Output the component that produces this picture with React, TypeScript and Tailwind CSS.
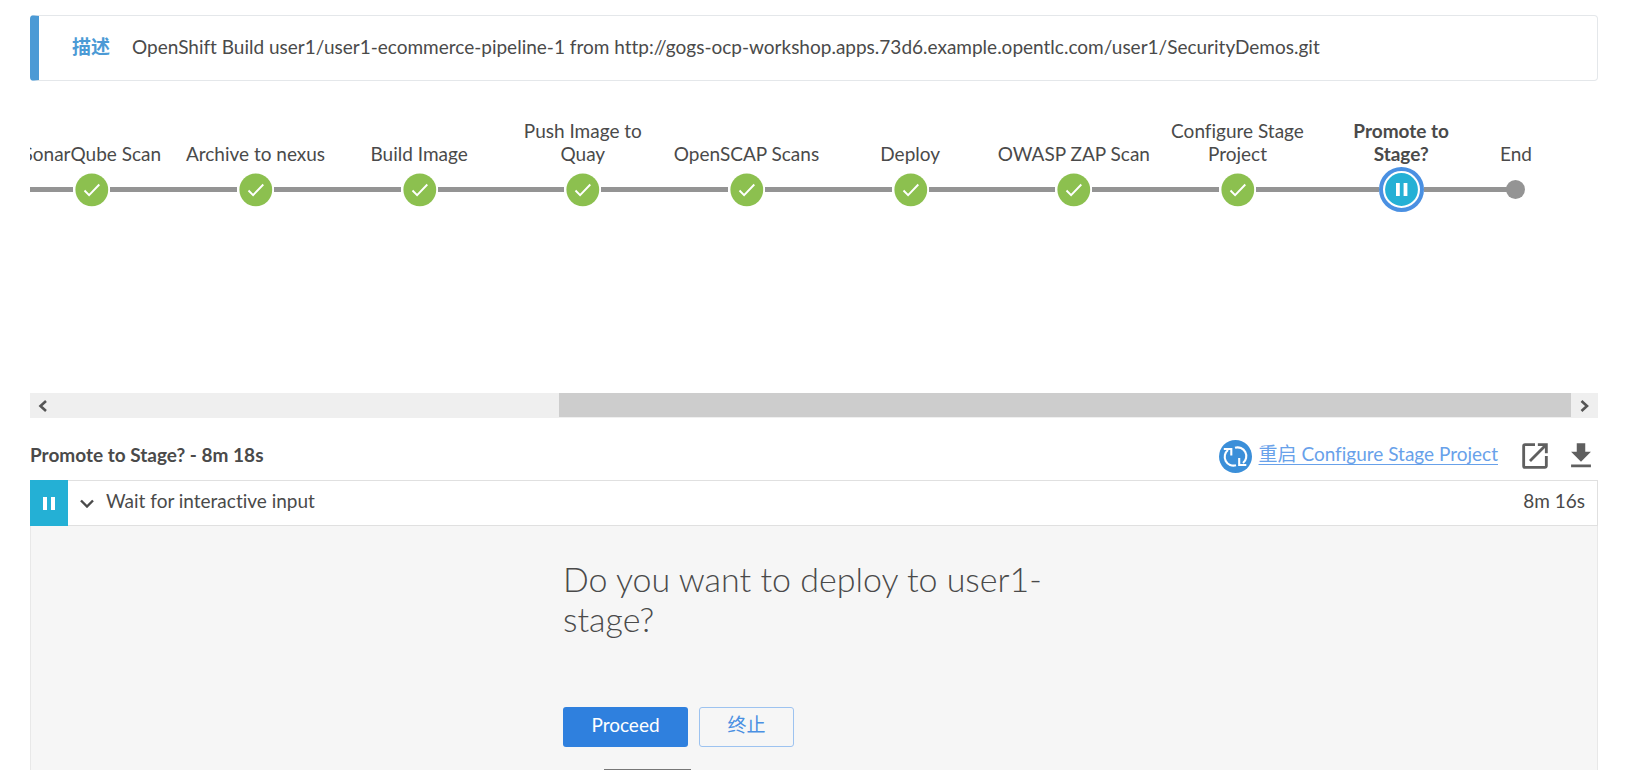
import React from "react";

const stages = [
  { name: "SonarQube Scan", state: "done" },
  { name: "Archive to nexus", state: "done" },
  { name: "Build Image", state: "done" },
  { name: "Push Image to Quay", state: "done" },
  { name: "OpenSCAP Scans", state: "done" },
  { name: "Deploy", state: "done" },
  { name: "OWASP ZAP Scan", state: "done" },
  { name: "Configure Stage Project", state: "done" },
  { name: "Promote to Stage?", state: "paused" },
];

function CheckNode() {
  return (
    <svg className="block h-[45px] w-[37px]" viewBox="4 0 37 45" aria-hidden="true">
      <circle cx="22.8" cy="22.8" r="16.4" fill="#8cc04f" />
      <path d="M15.5 23.5l4.6 4.6L30.3 17.5" fill="none" stroke="#fff" strokeWidth="1.9" />
    </svg>
  );
}

function PausedNode() {
  return (
    <svg className="block size-[45px]" viewBox="0 0 45 45" aria-hidden="true">
      <circle cx="22.5" cy="22.5" r="20.5" fill="#fff" stroke="#4a90e2" strokeWidth="4" />
      <circle cx="22.5" cy="22.5" r="16.4" fill="#24b0d5" />
      <path d="M17 16h3.8v13H17zM24.6 16h3.8v13h-3.8z" fill="#fff" />
    </svg>
  );
}

function Pipeline() {
  return (
    <div className="flex overflow-hidden pt-[38px] pb-[181px] text-center leading-[23px]">
      <ol className="-ml-5 grid min-w-0 flex-1 grid-cols-9">
        {stages.map((s) => (
          <li key={s.name} className="flex flex-col">
            <div className="flex h-12 items-end justify-center pb-0.5">
              <span className={s.state === "paused" ? "w-40 px-6 font-bold" : "w-40"}>{s.name}</span>
            </div>
            <div className="flex items-center">
              <span className="h-[5px] flex-1 bg-[#949494]" />
              {s.state === "paused" ? <PausedNode /> : <CheckNode />}
              <span className="h-[5px] flex-1 bg-[#949494]" />
            </div>
          </li>
        ))}
      </ol>
      <div className="mr-[49px] flex w-[66px] flex-col">
        <div className="flex h-12 items-end justify-center pb-0.5">End</div>
        <div className="flex h-[45px] items-center">
          <span className="h-[5px] w-6 bg-[#949494]" />
          <span className="-ml-px size-[19px] rounded-full bg-[#949494]" />
        </div>
      </div>
    </div>
  );
}

function ScrollStrip() {
  return (
    <div className="flex h-[25px] shrink-0 bg-[#efefef] text-[#555]">
      <button type="button" aria-label="Scroll left" className="flex w-[26px] items-center justify-center">
        <svg className="h-3 w-[10px]" viewBox="0 0 10 12" fill="none" stroke="currentColor" strokeWidth="2.6">
          <path d="M8 1L2.500 6 8 11" />
        </svg>
      </button>
      <div className="flex flex-1 justify-end">
        <div className="h-6 w-[66.8%] bg-[#cdcdcd]" />
      </div>
      <button type="button" aria-label="Scroll right" className="flex w-[27px] items-center justify-center">
        <svg className="h-3 w-[10px]" viewBox="0 0 10 12" fill="none" stroke="currentColor" strokeWidth="2.6">
          <path d="M1.500 1L7 6l-5.500 5" />
        </svg>
      </button>
    </div>
  );
}

export default function App() {
  return (
    <main className="h-screen overflow-hidden bg-white px-[30px] pt-[15px] font-['Lato','Noto_Sans_CJK_SC',sans-serif] text-[19px] text-[#4a4a4a] [font-variant-ligatures:none]">
      <div className="mr-4 flex h-screen flex-col">
        <section className="flex h-[66px] shrink-0 items-center gap-[22px] rounded border border-l-[9px] border-[#e4e7ea] border-l-[#4b9ad5] pb-0.5 pl-[33px]">
          <b className="text-[#4b9ad5]">描述</b>
          <p>OpenShift Build user1/user1-ecommerce-pipeline-1 from http://gogs-ocp-workshop.apps.73d6.example.opentlc.com/user1/SecurityDemos.git</p>
        </section>

        <Pipeline />
        <ScrollStrip />

        <header className="flex h-[62px] shrink-0 items-center">
          <h2 className="flex-1 pt-3 font-bold">Promote to Stage? - 8m 18s</h2>
          <a href="#restart" className="flex items-center gap-[7px] pt-[14px] text-[#68a1ea]">
            <svg className="size-[33px]" viewBox="0 0 33 33" aria-hidden="true">
              <circle cx="16.5" cy="16.5" r="16.5" fill="#3b8fd9" />
              <g fill="none" stroke="#fff" strokeWidth="2.1">
                <path d="M4.800 9H12.300v6.500" />
                <path d="M9 10A8.800 8.800 0 0 0 17 25.300" />
                <path d="M27.300 25H20.200v-7" />
                <path d="M16 7.700A8.800 8.800 0 0 1 24 23" />
              </g>
            </svg>
            <span className="pb-1 underline underline-offset-3 [text-decoration-skip-ink:none]">重启 Configure Stage Project</span>
          </a>
          <button type="button" aria-label="Open log" className="mt-[14px] ml-5 text-[#5f5f5f]">
            <svg className="size-[34px]" viewBox="0 0 24 24" fill="currentColor">
              <path d="M19 19H5V5h7V3H5a2 2 0 0 0-2 2v14a2 2 0 0 0 2 2h14c1.100 0 2-.9 2-2v-7h-2v7zM14 3v2h3.590l-9.830 9.830 1.410 1.410L19 6.410V10h2V3h-7z" />
            </svg>
          </button>
          <button type="button" aria-label="Download log" className="mt-[14px] ml-3 text-[#5f5f5f]">
            <svg className="size-[34px]" viewBox="0 0 24 24" fill="currentColor">
              <path d="M19 9h-4V3H9v6H5l7 7 7-7zM5 18v2h14v-2H5z" />
            </svg>
          </button>
        </header>

        <button type="button" className="flex h-[46px] shrink-0 items-center border border-l-0 border-[#e0e0e0] pr-3 text-left">
          <span className="flex h-[46px] w-[38px] items-center justify-center bg-[#24b0d5]">
            <svg className="h-[13px] w-3" viewBox="0 0 12 13" fill="#fff">
              <path d="M0 0h4v13H0zM8 0h4v13H8z" />
            </svg>
          </span>
          <svg className="mr-3 ml-3 h-[9px] w-[14px]" viewBox="0 0 14 9" fill="none" stroke="#4a4a4a" strokeWidth="2.4">
            <path d="M1 1.500l6 6 6-6" />
          </svg>
          <span className="flex-1 pb-1">Wait for interactive input</span>
          <span className="pb-1">8m 16s</span>
        </button>

        <section className="min-h-0 flex-1 overflow-hidden border-x border-[#e8e8e8] bg-[#f6f6f6]">
          <form className="mx-auto max-w-[502px] pt-[33px]">
            <h1 className="text-[34px] leading-10 font-light">Do you want to deploy to user1-stage?</h1>
            <div className="flex gap-[11px] pt-[68px] pb-[22px]">
              <button type="button" className="h-10 w-[125px] rounded-[3px] bg-[#2f80de] pb-1 text-white">Proceed</button>
              <button type="button" className="h-10 w-[95px] rounded-[3px] border border-[#9dc3f0] pb-1 text-[#4a90e2]">终止</button>
            </div>
            <div className="ml-[41px] h-3 w-[87px] bg-[#777]" />
          </form>
        </section>
      </div>
    </main>
  );
}
